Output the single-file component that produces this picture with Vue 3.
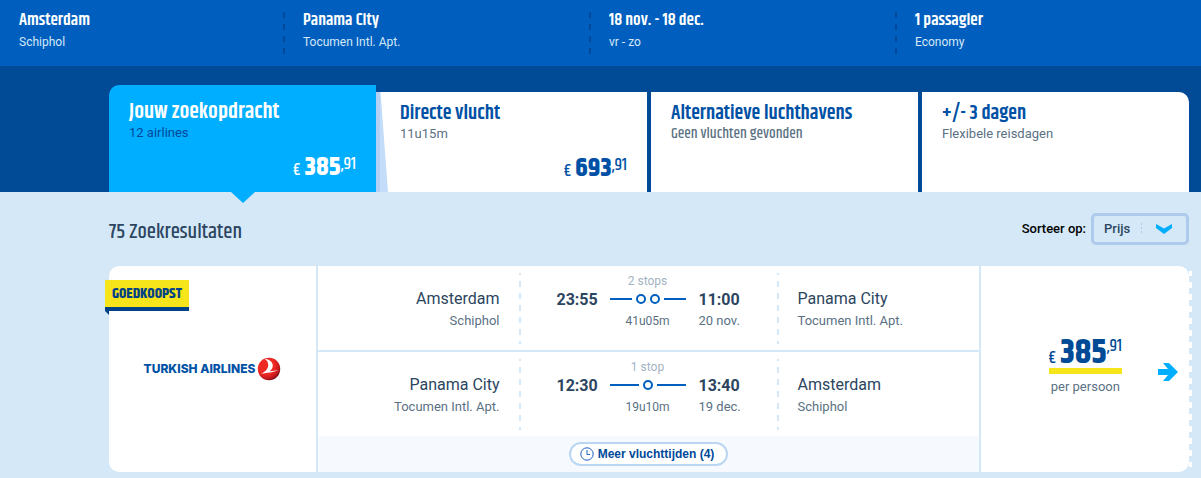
<script setup>
const search = [
  { title: 'Amsterdam', sub: 'Schiphol' },
  { title: 'Panama City', sub: 'Tocumen Intl. Apt.' },
  { title: '18 nov. - 18 dec.', sub: 'vr - zo' },
  { title: '1 passagier', sub: 'Economy' },
]
const tabs = [
  { title: 'Jouw zoekopdracht', sub: '12 airlines', price: '385', cents: '91', active: true },
  { title: 'Directe vlucht', sub: '11u15m', price: '693', cents: '91', slope: true },
  { title: 'Alternatieve luchthavens', sub: 'Geen vluchten gevonden', empty: true },
  { title: '+/- 3 dagen', sub: 'Flexibele reisdagen' },
]
const flights = [
  {
    from: 'Amsterdam', fromApt: 'Schiphol', depart: '23:55', stops: 2, stopText: '2 stops',
    duration: '41u05m', arrive: '11:00', date: '20 nov.', to: 'Panama City', toApt: 'Tocumen Intl. Apt.',
  },
  {
    from: 'Panama City', fromApt: 'Tocumen Intl. Apt.', depart: '12:30', stops: 1, stopText: '1 stop',
    duration: '19u10m', arrive: '13:40', date: '19 dec.', to: 'Amsterdam', toApt: 'Schiphol',
  },
]
</script>

<template>
  <div class="page">
    <header class="search">
      <div v-for="item in search" :key="item.title" class="search-item">
        <div class="search-title">{{ item.title }}</div>
        <div class="search-sub">{{ item.sub }}</div>
      </div>
    </header>

    <nav class="tabs">
      <button v-for="tab in tabs" :key="tab.title" type="button" class="tab" :class="{ active: tab.active }">
        <svg v-if="tab.slope" class="slope" viewBox="0 0 12 100" preserveAspectRatio="none" aria-hidden="true">
          <path d="M0 0H4.5L12 100H0Z" fill="#c2dcfa" />
          <path d="M0 0H4V100H0Z" fill="#b4d0f5" />
        </svg>
        <span class="tab-title">{{ tab.title }}</span>
        <span class="tab-sub" :class="{ narrow: tab.empty }">{{ tab.sub }}</span>
        <span v-if="tab.price" class="price">
          <span class="euro">€</span><span class="amount">{{ tab.price }}</span><span class="cents">,{{ tab.cents }}</span>
        </span>
      </button>
    </nav>

    <main class="results">
      <div class="toolbar">
        <h1>75 Zoekresultaten</h1>
        <div class="sort">
          <label for="sort">Sorteer op:</label>
          <div class="select-box">
            <select id="sort">
              <option>Prijs</option>
            </select>
            <svg class="chevron" width="16" height="10" viewBox="0 0 16 10" aria-hidden="true">
              <path d="M0 0L8 4.5L16 0V4L8 10L0 4Z" fill="#00aeff" />
            </svg>
          </div>
        </div>
      </div>

      <article class="card">
        <div class="airline">
          <span class="badge">GOEDKOOPST</span>
          <div class="logo">
            <span>TURKISH AIRLINES</span>
            <svg width="24" height="24" viewBox="0 0 24 24" aria-hidden="true">
              <defs>
                <radialGradient id="ball" cx="0.38" cy="0.36" r="0.68">
                  <stop offset="0.55" stop-color="#ee2a24" />
                  <stop offset="0.85" stop-color="#c4161c" />
                  <stop offset="1" stop-color="#6e0c10" />
                </radialGradient>
              </defs>
              <circle cx="12" cy="12" r="11.2" fill="url(#ball)" />
              <path d="M7.5 1.8C12 2 15.8 5 15.8 8.6C15.8 11 14.4 12.9 12.8 14.2L22 13.2L13.5 15.6C9 15.8 5 16.6 1.8 18.2C7 15.6 11 12.4 11.2 8.4C11.3 5.4 10 3.2 7.5 1.8Z" fill="#fff" />
            </svg>
          </div>
        </div>

        <div class="flights">
          <section v-for="f in flights" :key="f.depart" class="flight">
            <div class="place from">
              <div class="city">{{ f.from }}</div>
              <div class="apt">{{ f.fromApt }}</div>
            </div>
            <div class="times">
              <div class="time">{{ f.depart }}</div>
              <div class="path">
                <div class="stops">{{ f.stopText }}</div>
                <div class="line"><i v-for="n in f.stops" :key="n" class="dot"></i></div>
                <div class="duration">{{ f.duration }}</div>
              </div>
              <div class="arrival">
                <div class="time">{{ f.arrive }}</div>
                <div class="date">{{ f.date }}</div>
              </div>
            </div>
            <div class="place to">
              <div class="city">{{ f.to }}</div>
              <div class="apt">{{ f.toApt }}</div>
            </div>
          </section>
          <footer class="more">
            <button type="button">
              <svg width="14" height="14" viewBox="0 0 14 14" fill="none" stroke="#1c5fc4" aria-hidden="true">
                <circle cx="7" cy="7" r="6.2" />
                <path d="M7 3V7.5H10" />
              </svg>
              Meer vluchttijden (4)
            </button>
          </footer>
        </div>

        <div class="total">
          <div class="total-box">
            <span class="price big">
              <span class="euro">€</span><span class="amount">385</span><span class="cents">,91</span>
            </span>
            <span class="per">per persoon</span>
          </div>
          <a href="#" class="go" aria-label="Bekijk">
            <svg width="20" height="18" viewBox="0 0 20 18" aria-hidden="true">
              <path d="M0 6H10L5 0H11L20 9L11 18H5L10 12H0Z" fill="#00aeff" />
            </svg>
          </a>
        </div>
      </article>
    </main>
  </div>
</template>

<style>
body {
  background: #d5e8f7;
}
</style>

<style scoped>
.page {
  --narrow: "Khand", "Liberation Sans Narrow", "Roboto Condensed", "Liberation Sans", sans-serif;
  font-family: Roboto, "Liberation Sans", sans-serif;
  font-size: 13px;
  line-height: 16px;
  color: #5a7184;
}
button,
select {
  font: inherit;
  border: 0;
  margin: 0;
}
.search {
  display: grid;
  grid-template-columns: 283px 1fr 1fr 1fr;
  height: 66px;
  box-sizing: border-box;
  padding-top: 8px;
  background: #005fbe;
  color: #fff;
}
.search-item {
  padding-left: 20px;
  height: 46px;
  background: repeating-linear-gradient(#00499a 0 6px, transparent 6px 12px) 0 4px / 2px 42px no-repeat;
}
.search-item:first-child {
  padding-left: 19px;
  background: none;
}
.search-title {
  font: 600 17px/24px var(--narrow);
}
.search-sub {
  font-size: 12px;
  line-height: 20px;
  color: #d5e8f7;
}
.tabs {
  display: grid;
  grid-template-columns: repeat(4, 1fr);
  gap: 4px;
  align-items: end;
  height: 126px;
  padding: 0 12px 0 109px;
  background: #004a96;
}
.tab {
  position: relative;
  display: flex;
  flex-direction: column;
  height: 100px;
  padding: 12px 20px 0;
  background: #fff;
  color: #0051a5;
  text-align: left;
}
.tab.active {
  height: 107px;
  padding-top: 16px;
  border-radius: 10px 0 0 0;
  background: #00aeff;
  color: #fff;
}
.tab.active::after {
  content: "";
  position: absolute;
  top: 100%;
  left: 50%;
  margin-left: -12px;
  border: 12px solid transparent;
  border-top: 11px solid #00aeff;
  border-bottom: 0;
}
.tab:last-child {
  border-radius: 0 10px 0 0;
}
.slope {
  position: absolute;
  left: -4px;
  top: 0;
  width: 12px;
  height: 100%;
}
.tab-title {
  font: 600 20px/20px var(--narrow);
  white-space: nowrap;
}
.active .tab-title {
  font-size: 22px;
  line-height: 22px;
}
.tab-sub {
  line-height: 20px;
  color: #5a7184;
}
.active .tab-sub {
  color: #00499a;
}
.tab-sub.narrow {
  font-family: var(--narrow);
  font-size: 15px;
  font-weight: 500;
}
.price {
  display: flex;
  align-items: baseline;
  align-self: flex-end;
  margin-top: 7px;
  font-family: var(--narrow);
  font-size: 17px;
  font-weight: 500;
  line-height: 36px;
}
.amount {
  margin-left: 4px;
  font-size: 27px;
  font-weight: bold;
}
.cents {
  align-self: flex-start;
  line-height: 28px;
}
.results {
  padding: 20px 12px 6px 109px;
}
.toolbar {
  display: flex;
  align-items: center;
  justify-content: space-between;
  height: 34px;
}
h1 {
  margin: 0;
  padding-top: 6px;
  font: 500 21px/32px var(--narrow);
  color: #2c4560;
}
.sort {
  display: flex;
  align-items: center;
  gap: 5px;
  font-weight: 500;
  color: #000;
}
.select-box {
  position: relative;
}
select {
  appearance: none;
  display: block;
  width: 98px;
  height: 32px;
  padding: 0 10px;
  border: 3px solid #afcbeb;
  border-radius: 5px;
  background: repeating-linear-gradient(#afcbeb 0 2px, transparent 2px 4px) 47px 7px / 1px 12px no-repeat;
  color: #2c4560;
  font-weight: 500;
}
.chevron {
  position: absolute;
  right: 17px;
  top: 11px;
}
.card {
  position: relative;
  display: grid;
  grid-template-columns: 207px 1fr 208px;
  gap: 2px;
  margin-top: 20px;
}
.card::after {
  content: "";
  position: absolute;
  left: 100%;
  top: 5px;
  bottom: 5px;
  width: 3px;
  background: repeating-linear-gradient(#fff 0 5px, transparent 5px 11px, #fff 11px 12px);
}
.airline {
  position: relative;
  display: flex;
  align-items: center;
  justify-content: center;
  border-radius: 10px 0 0 10px;
  background: #fff;
}
.badge {
  position: absolute;
  left: -4px;
  top: 14px;
  padding: 0 7px;
  border-bottom: 4px solid #004288;
  background: #f7e51b;
  color: #004288;
  font: bold 15px/27px var(--narrow);
}
.badge::after {
  content: "";
  position: absolute;
  left: 0;
  top: 31px;
  border-top: 4px solid #004288;
  border-left: 4px solid transparent;
}
.logo {
  display: flex;
  align-items: center;
  gap: 2px;
  font: 800 12px/24px Inter, sans-serif;
  color: #0051a5;
  white-space: nowrap;
}
.flights {
  display: flex;
  flex-direction: column;
  background: #fff;
}
.flight {
  display: grid;
  grid-template-columns: 1fr 260px 1fr;
  height: 84px;
}
.flight + .flight {
  border-top: 2px solid #d5e8f7;
}
.place {
  padding: 22px 19px 0;
}
.from {
  text-align: right;
}
.city {
  font-size: 16px;
  line-height: 22px;
  color: #2c4560;
}
.apt {
  line-height: 22px;
}
.times {
  display: grid;
  grid-template-columns: 40px 76px 40px;
  gap: 13px;
  justify-content: center;
  padding-right: 2px;
  --dash: repeating-linear-gradient(#d5e8f7 0 2px, transparent 2px 8px, #d5e8f7 8px 12px);
  background: var(--dash) 0 7px / 2px 71px no-repeat, var(--dash) 100% 7px / 2px 71px no-repeat;
}
.time {
  padding-top: 23px;
  font-size: 16px;
  font-weight: bold;
  line-height: 22px;
  color: #2c4560;
}
.arrival {
  white-space: nowrap;
}
.date {
  line-height: 20px;
}
.path {
  padding-top: 7px;
  text-align: center;
}
.stops {
  font-size: 12px;
  color: #a3b3c2;
}
.line {
  display: flex;
  align-items: center;
  gap: 4px;
  height: 20px;
}
.line::before,
.line::after {
  content: "";
  flex: 1;
  height: 2px;
  background: #005fbe;
}
.dot {
  box-sizing: border-box;
  width: 10px;
  height: 10px;
  border: 2px solid #005fbe;
  border-radius: 50%;
}
.duration {
  font-size: 12px;
  line-height: 24px;
}
.more {
  display: flex;
  align-items: center;
  justify-content: center;
  height: 36px;
  background: #f6faff;
}
.more button {
  display: flex;
  align-items: center;
  gap: 4px;
  height: 24px;
  padding: 0 12px 0 9px;
  border: 2px solid #bbd6f2;
  border-radius: 12px;
  background: #fff;
  color: #00499a;
  font: bold 12px/20px "Liberation Sans", sans-serif;
}
.total {
  display: flex;
  align-items: center;
  justify-content: flex-end;
  gap: 36px;
  padding-right: 11px;
  border-radius: 0 10px 10px 0;
  background: #fff;
}
.total-box {
  display: flex;
  flex-direction: column;
  align-items: center;
}
.big {
  margin: 0;
  align-self: auto;
  color: #004a96;
  line-height: 20px;
  border-bottom: 6px solid #f7e51b;
}
.big .amount {
  font-size: 35px;
}
.big .cents {
  line-height: 6px;
}
.per {
  margin-top: 5px;
}
.go {
  display: flex;
  padding-top: 6px;
}
</style>
